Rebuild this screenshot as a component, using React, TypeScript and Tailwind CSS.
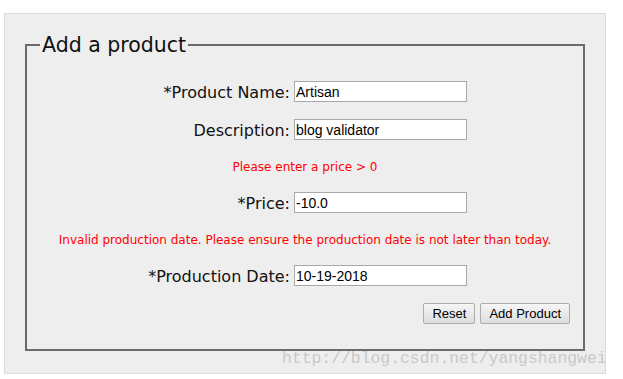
const LABEL = "w-[263px] shrink-0 text-right text-[16px] leading-[21px] h-[21px] pt-[1px] text-[#111]";
const INPUT =
  "w-[173px] h-[21px] border border-[#a9a9a9] bg-white px-[1px] text-[14px] leading-[17px] text-black outline-none font-['Liberation_Sans',Arial,sans-serif]";
const BUTTON =
  "h-[21px] px-[8px] border border-[#adadad] rounded-[2px] bg-gradient-to-b from-[#f6f6f6] to-[#dddddd] text-[13px] leading-[19px] text-black font-['Liberation_Sans',Arial,sans-serif]";

function Row({ label, value }: { label: string; value: string }) {
  return (
    <div className="flex items-center gap-[4px]">
      <label className={LABEL}>{label}</label>
      <input className={INPUT} defaultValue={value} />
    </div>
  );
}

function ErrorLine({ text }: { text: string }) {
  return <p className="h-[14px] text-center text-[12px] leading-[14px] text-[#ff0000]">{text}</p>;
}

export default function App() {
  return (
    <div className="relative w-[623px] h-[379px] bg-white pt-[13px] pl-[4px] font-['DejaVu_Sans',sans-serif] overflow-hidden">
      <div className="w-[602px] h-[361px] border border-[#dcdcdc] bg-[#eeeeee] pt-[19px] px-[20px]">
        <fieldset className="border-2 border-[#6b6b6b] pt-[24px] pb-[25px] px-0">
          <legend className="ml-[13px] px-[2px] text-[20.5px] leading-[24px] text-[#111]">Add a product</legend>

          <Row label="*Product Name:" value="Artisan" />
          <div className="mt-[17px]">
            <Row label="Description:" value="blog validator" />
          </div>

          <div className="mt-[20px]">
            <ErrorLine text="Please enter a price > 0" />
          </div>
          <div className="mt-[18px]">
            <Row label="*Price:" value="-10.0" />
          </div>

          <div className="mt-[20px]">
            <ErrorLine text="Invalid production date. Please ensure the production date is not later than today." />
          </div>
          <div className="mt-[18px]">
            <Row label="*Production Date:" value="10-19-2018" />
          </div>

          <div className="mt-[17px] flex justify-end gap-[5px] pr-[13px]">
            <button className={BUTTON}>Reset</button>
            <button className={BUTTON}>Add Product</button>
          </div>
        </fieldset>
      </div>

      {/* watermark */}
      <span className="absolute left-[282px] top-[349px] text-[16.4px] leading-[20px] text-[#c9c9c9] font-['Liberation_Mono',monospace] whitespace-nowrap">
        http://blog.csdn.net/yangshangwei
      </span>
    </div>
  );
}
